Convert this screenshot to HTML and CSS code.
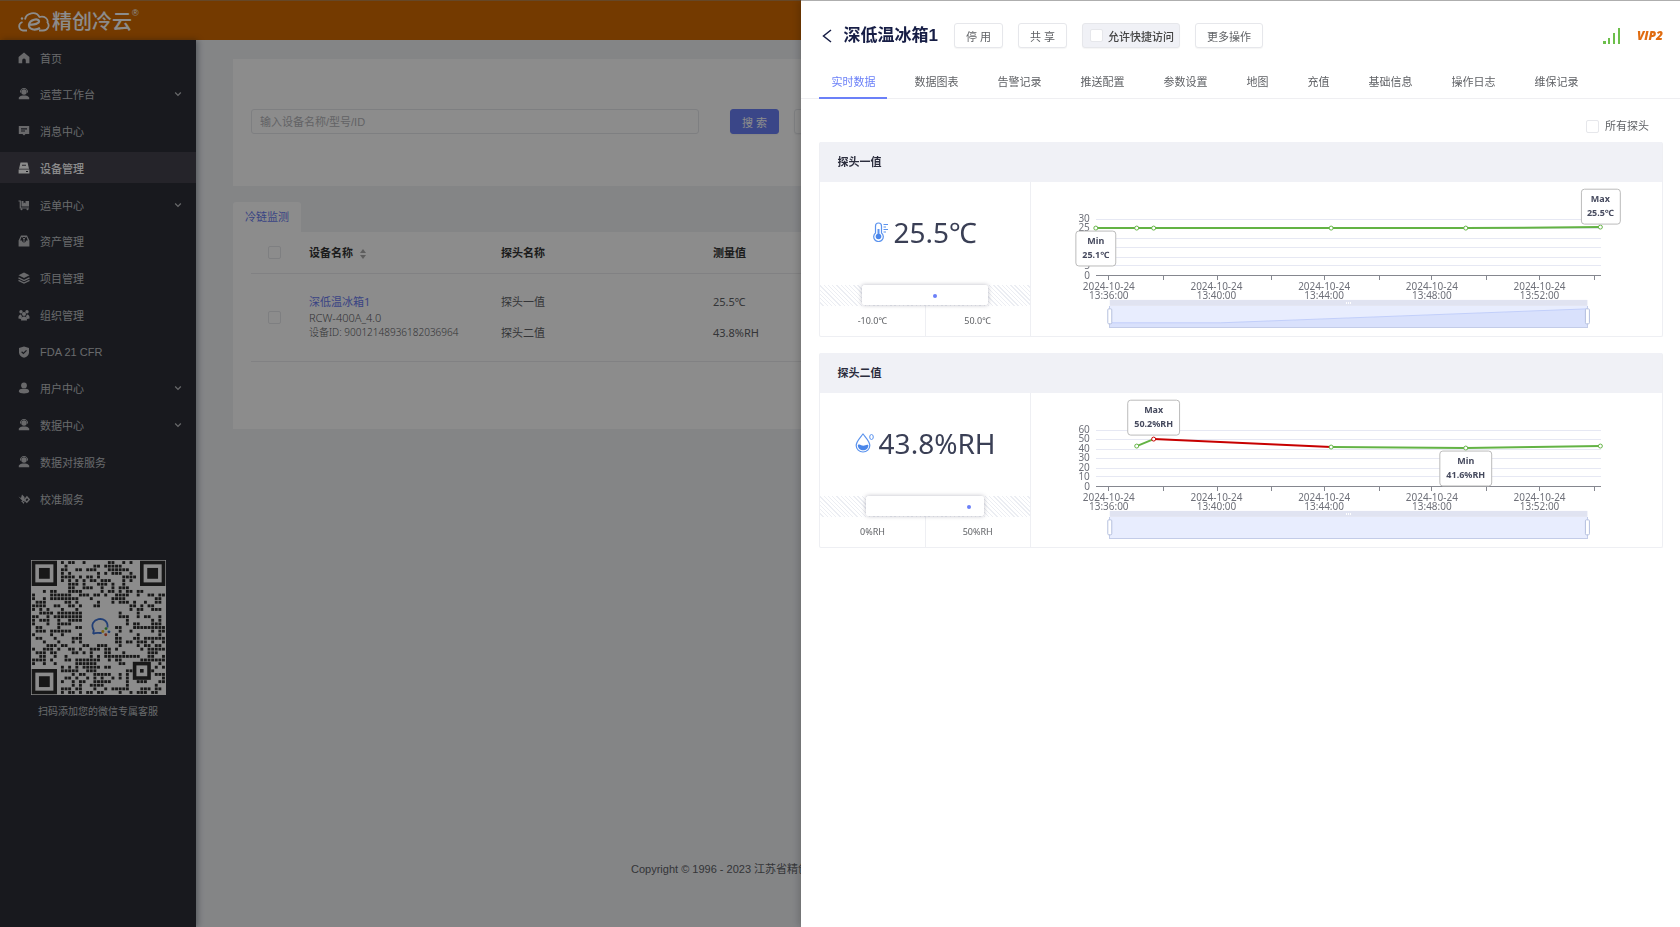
FILE: index.html
```html
<!DOCTYPE html>
<html lang="zh-CN">
<head>
    <meta charset="UTF-8">
    <title>精创冷云</title>
    <link rel="stylesheet" href="styles.css">
</head>
<body>
    <svg class="sprite" aria-hidden="true">
        <symbol id="i-home" viewBox="0 0 12 12"><path d="M6 0.5 0.6 5v6.2h3.6V8.4a1.8 1.8 0 0 1 3.6 0v2.8h3.6V5z"/></symbol>
        <symbol id="i-desk" viewBox="0 0 12 12"><circle cx="6" cy="4" r="2.7"/><path d="M2.6 4.6a3.5 3.5 0 1 1 6.8 0" fill="none" stroke="currentColor"/><path d="M.8 11.2V9.6c1-1.4 2.400-1.900 3.700-2.100h3c1.300.2 2.700.7 3.700 2.100v1.600z"/></symbol>
        <symbol id="i-msg" viewBox="0 0 12 12"><path fill-rule="evenodd" d="M.8 1h10.400v8H7.500L6 10.500 4.500 9H.8zM3 3.300v1.100h6V3.300zm0 2.300v1h4v-1z"/></symbol>
        <symbol id="i-device" viewBox="0 0 12 12"><path fill-rule="evenodd" d="M2.500.5h7l1.500 6.200H1zM4 2.800v1h4v-1z"/><path d="M.6 7.500h10.800v4H.6z"/><path d="M8 9.500h2" stroke="#2d2f38"/></symbol>
        <symbol id="i-cart" viewBox="0 0 12 12"><path d="M.5 2h1.800v7h8.700" fill="none" stroke="currentColor" stroke-width="1.200"/><path d="M3.500 2h2v2.500l1-1 1 1V2h3.500v5.500H3.500z"/><circle cx="3.500" cy="10.200" r="1"/><circle cx="9.500" cy="10.200" r="1"/></symbol>
        <symbol id="i-asset" viewBox="0 0 12 12"><path fill-rule="evenodd" d="M3 .6h6l2.400 5v6H.6v-6zM3.500 2 2.200 5.500H4a2 2 0 0 0 4 0h1.800L8.500 2z"/><path d="M4.500 2.500 6 4l1.500-1.500M6 4v3" fill="none" stroke="currentColor"/></symbol>
        <symbol id="i-layers" viewBox="0 0 12 12"><path d="M6 .5 11.500 3.300 6 6.100.5 3.300z"/><path d="M.5 5.800 6 8.500l5.500-2.700M.5 8.300 6 11l5.500-2.700" fill="none" stroke="currentColor" stroke-width="1.300"/></symbol>
        <symbol id="i-group" viewBox="0 0 12 12"><circle cx="3" cy="2.800" r="1.700"/><circle cx="9" cy="2.800" r="1.700"/><circle cx="6" cy="5" r="2"/><path d="M.4 9.500c0-3 1-4 2.600-4l1 2L3 10zM11.600 9.500c0-3-1-4-2.600-4l-1 2 1 2.500zM3 11.500c0-3 1-4 3-4s3 1 3 4z"/></symbol>
        <symbol id="i-shield" viewBox="0 0 12 12"><path d="M6 .4 11 2v4.500c0 2.500-2 4.300-5 5.300-3-1-5-2.800-5-5.300V2z"/><path d="M3.600 5.800 5.400 7.500 8.500 4.300" fill="none" stroke="#2d2f38" stroke-width="1.200"/></symbol>
        <symbol id="i-user" viewBox="0 0 12 12"><circle cx="6" cy="3.400" r="2.900"/><path d="M.8 9.500c0-2 2-2.700 3.700-2.700h3c1.700 0 3.700.7 3.700 2.700 0 2.500-10.400 2.500-10.400 0z"/></symbol>
        <symbol id="i-check" viewBox="0 0 12 12"><path d="M.5 3.500 3 5l1-3.500L6.500 4v5.500L4.500 8zM3 8l3 3V8z"/><path d="M9 4 11.300 6.500 8.800 9.200 6.500 7z" fill="none" stroke="currentColor" stroke-width="1.500"/></symbol>
        <symbol id="i-down" viewBox="0 0 8 8"><path d="M1.200 2.500 4 5.300l2.800-2.800" fill="none" stroke="currentColor" stroke-width="1.200"/></symbol>
    </svg>

    <header class="topbar">
        <svg class="logo" viewBox="0 0 32 20" fill="none" stroke="#fff" stroke-width="1.800">
            <path d="M9 18.500H5c-5-1-5-7-.5-8.500M7 7.500C8 1 18 -1.500 21.500 5c5-1.500 9 2 8 5.500 2.500 3 .5 8-4.500 8h-4"/>
            <path d="M12 12.500c4 .5 9.500-1 9-3.500-.8-3-9-1.500-10 3.500-.7 5 6 6.500 11 3.500" stroke-width="2.200"/>
            <circle cx="4" cy="6.500" r="1.200" fill="#fff" stroke="none"/>
        </svg>
        <span class="brand">精创冷云</span><sup class="reg">®</sup>
    </header>

    <div class="layout">
        <aside class="sidebar">
            <nav class="menu">
                <a href="#"><svg><use href="#i-home"/></svg>首页</a>
                <a href="#"><svg><use href="#i-desk"/></svg>运营工作台<svg class="arrow"><use href="#i-down"/></svg></a>
                <a href="#"><svg><use href="#i-msg"/></svg>消息中心</a>
                <a href="#" class="active"><svg><use href="#i-device"/></svg>设备管理</a>
                <a href="#"><svg><use href="#i-cart"/></svg>运单中心<svg class="arrow"><use href="#i-down"/></svg></a>
                <a href="#"><svg><use href="#i-asset"/></svg>资产管理</a>
                <a href="#"><svg><use href="#i-layers"/></svg>项目管理</a>
                <a href="#"><svg><use href="#i-group"/></svg>组织管理</a>
                <a href="#"><svg><use href="#i-shield"/></svg>FDA 21 CFR</a>
                <a href="#"><svg><use href="#i-user"/></svg>用户中心<svg class="arrow"><use href="#i-down"/></svg></a>
                <a href="#"><svg><use href="#i-desk"/></svg>数据中心<svg class="arrow"><use href="#i-down"/></svg></a>
                <a href="#"><svg><use href="#i-desk"/></svg>数据对接服务</a>
                <a href="#"><svg><use href="#i-check"/></svg>校准服务</a>
            </nav>
            <div class="service">
                <svg id="qr" class="qr" viewBox="-2 -2 374 374"></svg>
                <p>扫码添加您的微信专属客服</p>
            </div>
        </aside>

        <main class="content">
            <form class="search card">
                <input type="text" class="keyword" placeholder="输入设备名称/型号/ID" aria-label="输入设备名称/型号/ID">
                <button type="button" class="btn primary">搜 索</button>
                <button type="button" class="btn">重 置</button>
            </form>

            <div class="list-tabs"><a href="#">冷链监测</a></div>
            <section class="list card">
                <table>
                    <colgroup><col class="c-check"><col class="c-name"><col class="c-probe"><col class="c-value"></colgroup>
                    <thead>
                        <tr>
                            <th><input type="checkbox" aria-label="全选"></th>
                            <th>设备名称
                                <svg class="sort" viewBox="0 0 6 10"><path d="M3 0 6 4H0zM3 10 0 6h6z"/></svg>
                            </th>
                            <th>探头名称</th>
                            <th>测量值</th>
                        </tr>
                    </thead>
                    <tbody>
                        <tr>
                            <td><input type="checkbox" aria-label="深低温冰箱1"></td>
                            <td class="device">
                                <a href="#">深低温冰箱1</a>
                                <p class="model">RCW-400A_4.0</p>
                                <p>设备ID: 90012148936182036964</p>
                            </td>
                            <td class="probe"><p>探头一值</p><p>探头二值</p></td>
                            <td class="probe"><p>25.5℃</p><p>43.8%RH</p></td>
                        </tr>
                    </tbody>
                </table>
            </section>

            <footer class="footer">Copyright © 1996 - 2023 江苏省精创电气</footer>
        </main>
    </div>

    <div class="mask"></div>

    <section class="drawer">
        <div class="drawer-head">
            <a href="#" class="back" aria-label="返回"><svg viewBox="0 0 10 14"><path d="M9 1 1.500 7 9 13" fill="none" stroke="#161d45" stroke-width="1.500"/></svg></a>
            <h1>深低温冰箱1</h1>
            <div class="actions">
                <button type="button" class="btn">停 用</button>
                <button type="button" class="btn">共 享</button>
                <label class="btn quick"><input type="checkbox">允许快捷访问</label>
                <button type="button" class="btn">更多操作</button>
            </div>
            <svg class="signal" viewBox="0 0 18 16"><path d="M0 13h3v3H0zM5 10h2v6H5zM10 5h2v11h-2zM15 0h2v16h-2z" fill="#6cbf4b"/></svg>
            <span class="vip">VIP2</span>
        </div>

        <nav class="tabs">
            <a href="#" class="on">实时数据</a>
            <a href="#">数据图表</a>
            <a href="#">告警记录</a>
            <a href="#">推送配置</a>
            <a href="#">参数设置</a>
            <a href="#">地图</a>
            <a href="#">充值</a>
            <a href="#">基础信息</a>
            <a href="#">操作日志</a>
            <a href="#">维保记录</a>
        </nav>

        <div class="drawer-body">
            <label class="all"><input type="checkbox">所有探头</label>

            <article class="panel">
                <h2>探头一值</h2>
                <div class="panel-body">
                    <div class="now">
                        <div class="reading">
                            <svg viewBox="0 0 15 20" class="thermo" fill="none" stroke="#5b93ee">
                                <path d="M2.500 11V4a3 3 0 0 1 6 0v7a4.800 4.800 0 1 1-6 0z" stroke-width="1.200"/>
                                <path d="M5.500 7v8" stroke-width="2"/><circle cx="5.500" cy="14.500" r="2.800" fill="#4a86ea" stroke="none"/>
                                <path d="M10.500 2.500H15M10.500 5H13M10.500 7.500H15M10.500 10H13"/>
                            </svg>
                            25.5℃
                        </div>
                        <div class="range"><div class="span" style="left:20%;width:60%"></div><i class="dot" style="left:54%"></i></div>
                        <div class="limits"><span>-10.0℃</span><span>50.0℃</span></div>
                    </div>
                    <svg class="chart" viewBox="0 0 633 154">
                        <path class="grid" d="M65 37H572M65 46H572M65 56H572M65 65H572M65 75H572M65 84H572"/>
                        <path class="axis" d="M65 94H572M78 94v4M133 94v4M187 94v4M241 94v4M294 94v4M349 94v4M402 94v4M457 94v4M510 94v4M565 94v4"/>
                        <g class="y">
                            <text x="59" y="40">30</text><text x="59" y="49">25</text><text x="59" y="59">20</text><text x="59" y="68">15</text><text x="59" y="78">10</text><text x="59" y="87">5</text><text x="59" y="97">0</text>
                        </g>
                        <g class="x">
                            <text x="78" y="108">2024-10-24</text><text x="78" y="117">13:36:00</text>
                            <text x="186" y="108">2024-10-24</text><text x="186" y="117">13:40:00</text>
                            <text x="294" y="108">2024-10-24</text><text x="294" y="117">13:44:00</text>
                            <text x="402" y="108">2024-10-24</text><text x="402" y="117">13:48:00</text>
                            <text x="510" y="108">2024-10-24</text><text x="510" y="117">13:52:00</text>
                        </g>
                        <path class="ok" d="M65 46 106 46 123 46 301 46 436 46 571 45"/>
                        <g class="pt">
                            <circle cx="65" cy="46" r="2"/><circle cx="106" cy="46" r="2"/><circle cx="123" cy="46" r="2"/><circle cx="301" cy="46" r="2"/><circle cx="436" cy="46" r="2"/><circle cx="571" cy="45" r="2"/>
                        </g>
                        <g class="zoom">
                            <rect class="win" x="79" y="124" width="479" height="22"/>
                            <path class="shadow" d="M79 141H190L558 127V146H79z"/><path class="trend" d="M79 141H190L558 127"/>
                            <path class="edge" d="M79 124V146H558V124"/>
                            <rect class="bar" x="79" y="118" width="479" height="6"/>
                            <path class="grip" d="M316 120v2M318 120v2M320 120v2"/>
                            <rect class="handle" x="77" y="127" width="4" height="15" rx="1"/><rect class="handle" x="556" y="127" width="4" height="15" rx="1"/>
                        </g>
                        <g class="tip"><rect x="45" y="49" width="40" height="35" rx="3"/><text x="65" y="62">Min</text><text x="65" y="76">25.1℃</text></g>
                        <g class="tip"><rect x="552" y="7" width="39" height="35" rx="3"/><text x="571" y="20">Max</text><text x="571" y="34">25.5℃</text></g>
                    </svg>
                </div>
            </article>

            <article class="panel">
                <h2>探头二值</h2>
                <div class="panel-body">
                    <div class="now">
                        <div class="reading">
                            <svg viewBox="0 0 19 20" class="drop" fill="none" stroke="#5b93ee">
                                <path d="M8 1C5 5 1.200 8.500 1.200 12.500a6.800 6.500 0 0 0 13.600 0C14.800 8.500 11 5 8 1z" stroke-width="1.200"/>
                                <path d="M2.800 12c2-1.500 3.500.8 5.500.8s3-1.500 5-.8c.5 7-10.500 7-10.500 0z" fill="#4a86ea" stroke="none"/>
                                <ellipse cx="16.500" cy="4" rx="1.800" ry="2.500"/>
                            </svg>
                            43.8%RH
                        </div>
                        <div class="range"><div class="span" style="left:22%;width:56%"></div><i class="dot" style="left:70%"></i></div>
                        <div class="limits"><span>0%RH</span><span>50%RH</span></div>
                    </div>
                    <svg class="chart" viewBox="0 0 633 154">
                        <path class="grid" d="M65 37H572M65 46H572M65 56H572M65 65H572M65 75H572M65 84H572"/>
                        <path class="axis" d="M65 94H572M78 94v4M133 94v4M187 94v4M241 94v4M294 94v4M349 94v4M402 94v4M457 94v4M510 94v4M565 94v4"/>
                        <g class="y">
                            <text x="59" y="40">60</text><text x="59" y="49">50</text><text x="59" y="59">40</text><text x="59" y="68">30</text><text x="59" y="78">20</text><text x="59" y="87">10</text><text x="59" y="97">0</text>
                        </g>
                        <g class="x">
                            <text x="78" y="108">2024-10-24</text><text x="78" y="117">13:36:00</text>
                            <text x="186" y="108">2024-10-24</text><text x="186" y="117">13:40:00</text>
                            <text x="294" y="108">2024-10-24</text><text x="294" y="117">13:44:00</text>
                            <text x="402" y="108">2024-10-24</text><text x="402" y="117">13:48:00</text>
                            <text x="510" y="108">2024-10-24</text><text x="510" y="117">13:52:00</text>
                        </g>
                        <path class="ok" d="M106 53 123 46M301 54 436 55 571 53"/>
                        <path class="bad" d="M123 46 301 54"/>
                        <g class="pt">
                            <circle cx="106" cy="53" r="2"/><circle class="red" cx="123" cy="46" r="2"/><circle cx="301" cy="54" r="2"/><circle cx="436" cy="55" r="2"/><circle cx="571" cy="53" r="2"/>
                        </g>
                        <g class="zoom">
                            <rect class="win" x="79" y="124" width="479" height="22"/>
                            <path class="edge" d="M79 124V146H558V124"/>
                            <rect class="bar" x="79" y="118" width="479" height="6"/>
                            <path class="grip" d="M316 120v2M318 120v2M320 120v2"/>
                            <rect class="handle" x="77" y="127" width="4" height="15" rx="1"/><rect class="handle" x="556" y="127" width="4" height="15" rx="1"/>
                        </g>
                        <g class="tip"><rect x="97" y="7" width="52" height="35" rx="3"/><text x="123" y="20">Max</text><text x="123" y="34">50.2%RH</text></g>
                        <g class="tip"><rect x="410" y="58" width="52" height="35" rx="3"/><text x="436" y="71">Min</text><text x="436" y="85">41.6%RH</text></g>
                    </svg>
                </div>
            </article>
        </div>
    </section>

    <script src="qr.js"></script>
</body>
</html>
```
FILE: styles.css
```css
* {
    box-sizing: border-box;
}
body {
    margin: 0;
    min-height: 100vh;
    display: flex;
    flex-direction: column;
    background: #f0f2f5;
    color: #606266;
    font-family: "Liberation Sans", "Noto Sans CJK SC", sans-serif;
    font-size: 11px;
}
h1, h2, p {
    margin: 0;
}
a {
    color: inherit;
    text-decoration: none;
}
.sprite {
    display: none;
}
input[type="checkbox"] {
    appearance: none;
    width: 13px;
    height: 13px;
    margin: 0;
    border: 1px solid #e6e7eb;
    border-radius: 2px;
    background: #fff;
}

/* top bar */
.topbar {
    display: flex;
    align-items: center;
    height: 40px;
    padding: 2px 0 0 18px;
    border-top: 1px solid #b9814a;
    background: #d36a00;
    color: #fff;
}
.logo {
    width: 32px;
    height: 20px;
    margin-right: 2px;
}
.brand {
    font-size: 20px;
    font-weight: 500;
    line-height: 24px;
}
.reg {
    align-self: flex-start;
    margin-top: 5px;
    font-size: 9px;
}

/* sidebar */
.layout {
    flex: 1;
    display: flex;
}
.sidebar {
    z-index: 1;
    width: 196px;
    padding-top: 2px;
    background: #2d2f38;
    box-shadow: 2px 0 6px rgba(0, 21, 41, .35);
}
.menu {
    display: flex;
    flex-direction: column;
    justify-content: space-between;
    height: 472px;
}
.menu a {
    display: flex;
    align-items: center;
    height: 31px;
    padding: 0 14px 0 18px;
    color: #bfc0c4;
}
.menu svg {
    width: 12px;
    height: 12px;
    margin-right: 10px;
    fill: currentColor;
}
.menu .arrow {
    width: 8px;
    height: 8px;
    margin: 0 0 0 auto;
}
.menu .active {
    background: #44434d;
    color: #fff;
    font-weight: 500;
}
.service {
    padding-top: 46px;
    text-align: center;
    font-size: 10px;
    color: #bfc0c4;
}
.qr {
    display: block;
    width: 135px;
    height: 135px;
    margin: 0 auto 8px;
    background: #fff;
}

/* device list */
.content {
    flex: 1;
    display: flex;
    flex-direction: column;
    padding: 19px 36px 0 37px;
}
.card {
    background: #fff;
}
.search {
    display: flex;
    padding: 50px 18px 52px;
}
.keyword {
    flex: 0 1 448px;
    height: 25px;
    margin-right: 31px;
    padding: 0 8px;
    border: 1px solid #e6e7eb;
    border-radius: 3px;
    background: #fff;
    font: inherit;
}
.keyword::placeholder {
    color: #b4b5b9;
}
.btn {
    height: 25px;
    padding: 0 11px;
    border: 1px solid #e6e7eb;
    border-radius: 3px;
    background: #fff;
    box-shadow: 0 1px 1px rgba(0, 0, 0, .04);
    color: #606266;
    font: inherit;
    font-size: 11px;
}
.search .btn {
    margin-right: 15px;
}
.search .primary, .primary {
    border-color: #6b80f8;
    background: #6b80f8;
    color: #fff;
}
.list-tabs {
    display: flex;
    margin-top: 16px;
}
.list-tabs a {
    padding: 0 12px;
    border-radius: 3px 3px 0 0;
    background: #fff;
    color: #6b7cf0;
    line-height: 30px;
}
.list {
    padding: 0 18px 67px;
}
table {
    width: 100%;
    table-layout: fixed;
    border-collapse: collapse;
}
.c-check {
    width: 58px;
}
.c-name {
    width: 192px;
}
.c-probe {
    width: 212px;
}
th {
    height: 41px;
    padding: 0;
    border-bottom: 1px solid #ececee;
    color: #333;
    text-align: left;
}
td {
    height: 88px;
    padding: 0;
    border-bottom: 1px solid #ececee;
}
th:first-child, td:first-child {
    padding-left: 17px;
}
th input, td input {
    display: block;
}
.sort {
    width: 6px;
    height: 10px;
    margin-left: 4px;
    vertical-align: middle;
    fill: #aaa;
}
.device {
    font-family: "Noto Sans", "Noto Sans CJK SC", sans-serif;
    font-size: 10px;
    font-weight: 300;
    line-height: 15px;
    white-space: nowrap;
}
.device a {
    color: #6b7cf0;
    font-size: 11px;
    font-weight: normal;
}
.model {
    font-size: 11px;
}
.probe {
    font-family: "Noto Sans", "Noto Sans CJK SC", sans-serif;
    line-height: 16px;
}
.probe p + p {
    margin-top: 15px;
}
.footer {
    margin-top: auto;
    padding: 0 0 50px 398px;
    line-height: 16px;
    white-space: nowrap;
}

/* drawer */
.mask {
    position: fixed;
    inset: 0;
    z-index: 2;
    background: rgba(0, 0, 0, .45);
}
.drawer {
    position: fixed;
    top: 0;
    right: 0;
    bottom: 0;
    z-index: 3;
    width: calc(52% + 5px);
    overflow: auto;
    border-top: 1px solid #aeaeae;
    background: #fff;
    box-shadow: -2px 0 8px rgba(0, 0, 0, .2);
}
.drawer-head {
    display: flex;
    align-items: center;
    padding: 22px 17px 0 20px;
}
.back svg {
    display: block;
    width: 12px;
    height: 14px;
}
h1 {
    margin: 0 16px 0 10px;
    color: #161d45;
    font-size: 17px;
    line-height: 25px;
}
.actions {
    display: flex;
    gap: 15px;
}
.quick {
    display: flex;
    align-items: center;
    gap: 5px;
    padding: 0 5px 0 7px;
    background: #f0f1f6;
    color: #444;
    font-weight: 500;
}
.signal {
    width: 18px;
    height: 16px;
    margin: 0 16px 0 auto;
}
.vip {
    color: #e06c10;
    font-family: "Open Sans", "Noto Sans", sans-serif;
    font-size: 12px;
    font-style: italic;
    font-weight: 800;
}
.tabs {
    display: flex;
    gap: 15px;
    margin-top: 20px;
    padding-left: 18px;
    border-bottom: 1px solid #efeff2;
}
.tabs a {
    margin-bottom: -1px;
    padding: 0 12px;
    border-bottom: 2px solid transparent;
    line-height: 29px;
}
.tabs .on {
    border-color: #6b80f8;
    color: #6b80f8;
}
.drawer-body {
    display: flex;
    flex-direction: column;
    padding: 19px 17px 0 18px;
}
.all {
    display: flex;
    align-items: center;
    align-self: flex-end;
    gap: 6px;
    margin-right: 14px;
    line-height: 16px;
}
.panel {
    margin: 8px 0;
    border: 1px solid #eeeff3;
    border-top: 0;
    border-radius: 2px;
}
h2 {
    padding-left: 17px;
    background: #f0f1f6;
    color: #2b2d3d;
    font-size: 11px;
    line-height: 40px;
}
.panel-body {
    display: grid;
    grid-template-columns: 1fr 3fr;
    font-family: "Noto Sans", "Noto Sans CJK SC", sans-serif;
}
.now {
    display: flex;
    flex-direction: column;
    border-right: 1px solid #eeeff3;
}
.reading {
    flex: 1;
    display: flex;
    align-items: center;
    justify-content: center;
    gap: 5px;
    padding-bottom: 3px;
    color: #3a3f55;
    font-size: 28px;
}
.thermo {
    width: 15px;
    height: 20px;
}
.drop {
    width: 19px;
    height: 20px;
}
.range {
    position: relative;
    height: 21px;
    background: repeating-linear-gradient(45deg, #fff 0 2px, #eceef3 2px 3px);
}
.span {
    position: absolute;
    top: 0;
    bottom: 1px;
    border-radius: 2px;
    background: #fff;
    box-shadow: 0 0 4px rgba(60, 60, 90, .35);
}
.dot {
    position: absolute;
    top: 9px;
    width: 4px;
    height: 4px;
    border-radius: 50%;
    background: #6b80f8;
}
.limits {
    display: flex;
    font-size: 9px;
    line-height: 30px;
    text-align: center;
}
.limits span {
    flex: 1;
}
.limits span + span {
    border-left: 1px solid #eeeff3;
}

/* charts */
.chart {
    display: block;
    width: 100%;
    height: 154px;
    font-size: 10px;
}
.grid, .axis, .edge, .grip {
    fill: none;
    shape-rendering: crispEdges;
}
.grid {
    stroke: #e6e8f3;
}
.axis {
    stroke: #85878f;
}
.x, .y {
    fill: #6e7079;
}
.x {
    text-anchor: middle;
}
.y {
    text-anchor: end;
}
.ok, .bad {
    fill: none;
    stroke: #63b344;
    stroke-width: 2;
}
.bad {
    stroke: #c70000;
}
.pt {
    fill: #fff;
    stroke: #63b344;
}
.red {
    stroke: #c70000;
}
.win {
    fill: #e8edfe;
}
.shadow {
    fill: #d9e1fc;
}
.trend {
    fill: none;
    stroke: #c2cffa;
}
.edge {
    stroke: #c3cce8;
}
.bar {
    fill: #e0e3f1;
}
.grip {
    stroke: #fff;
}
.handle {
    fill: #fff;
    stroke: #b5c0de;
}
.tip rect {
    fill: #fff;
    stroke: #bbb;
}
.tip text {
    fill: #464a5e;
    font-size: 9px;
    font-weight: bold;
    text-anchor: middle;
}
```
FILE: qr.js
```js
// draws the service QR code, 37 x 37 modules
var qr = document.getElementById('qr');
var out = '';
var seed = 7;

function rnd() {
    seed = (seed * 16807) % 2147483647;
    return seed / 2147483647;
}

function box(x, y, s, color) {
    out += `<rect x="${x * 10}" y="${y * 10}" width="${s * 10}" height="${s * 10}" fill="${color}"/>`;
}

for (var r = 0; r < 37; r++) {
    for (var c = 0; c < 37; c++) {
        var corner = (r < 8 && (c < 8 || c > 28)) || (r > 28 && c < 8);
        var align = r > 27 && r < 33 && c > 27 && c < 33;
        var logo = r > 12 && r < 23 && c > 13 && c < 23;
        if (corner || align || logo || rnd() > 0.5) continue;
        out += `<rect x="${c * 10 + 1}" y="${r * 10 + 1}" width="8" height="8" fill="#2c2c2c"/>`;
    }
}
[[0, 0], [30, 0], [0, 30]].forEach(p => {
    box(p[0], p[1], 7, '#2c2c2c');
    box(p[0] + 1, p[1] + 1, 5, '#fff');
    box(p[0] + 2, p[1] + 2, 3, '#2c2c2c');
});
box(28, 28, 5, '#2c2c2c');
box(29, 29, 3, '#fff');
box(30, 30, 1, '#2c2c2c');

// chat bubble in the middle
out += '<path d="M170 203l2-10c-20-34 42-46 38-8M170 203c8-5 14-2 24-3" fill="none" stroke="#3f74d8" stroke-width="5"/>';
out += '<circle cx="206" cy="188" r="4" fill="#4bb14b"/><circle cx="197" cy="196" r="4" fill="#e8b923"/><circle cx="214" cy="197" r="4" fill="#3f74d8"/><circle cx="205" cy="205" r="4" fill="#d9532c"/>';
qr.innerHTML = out;
```
